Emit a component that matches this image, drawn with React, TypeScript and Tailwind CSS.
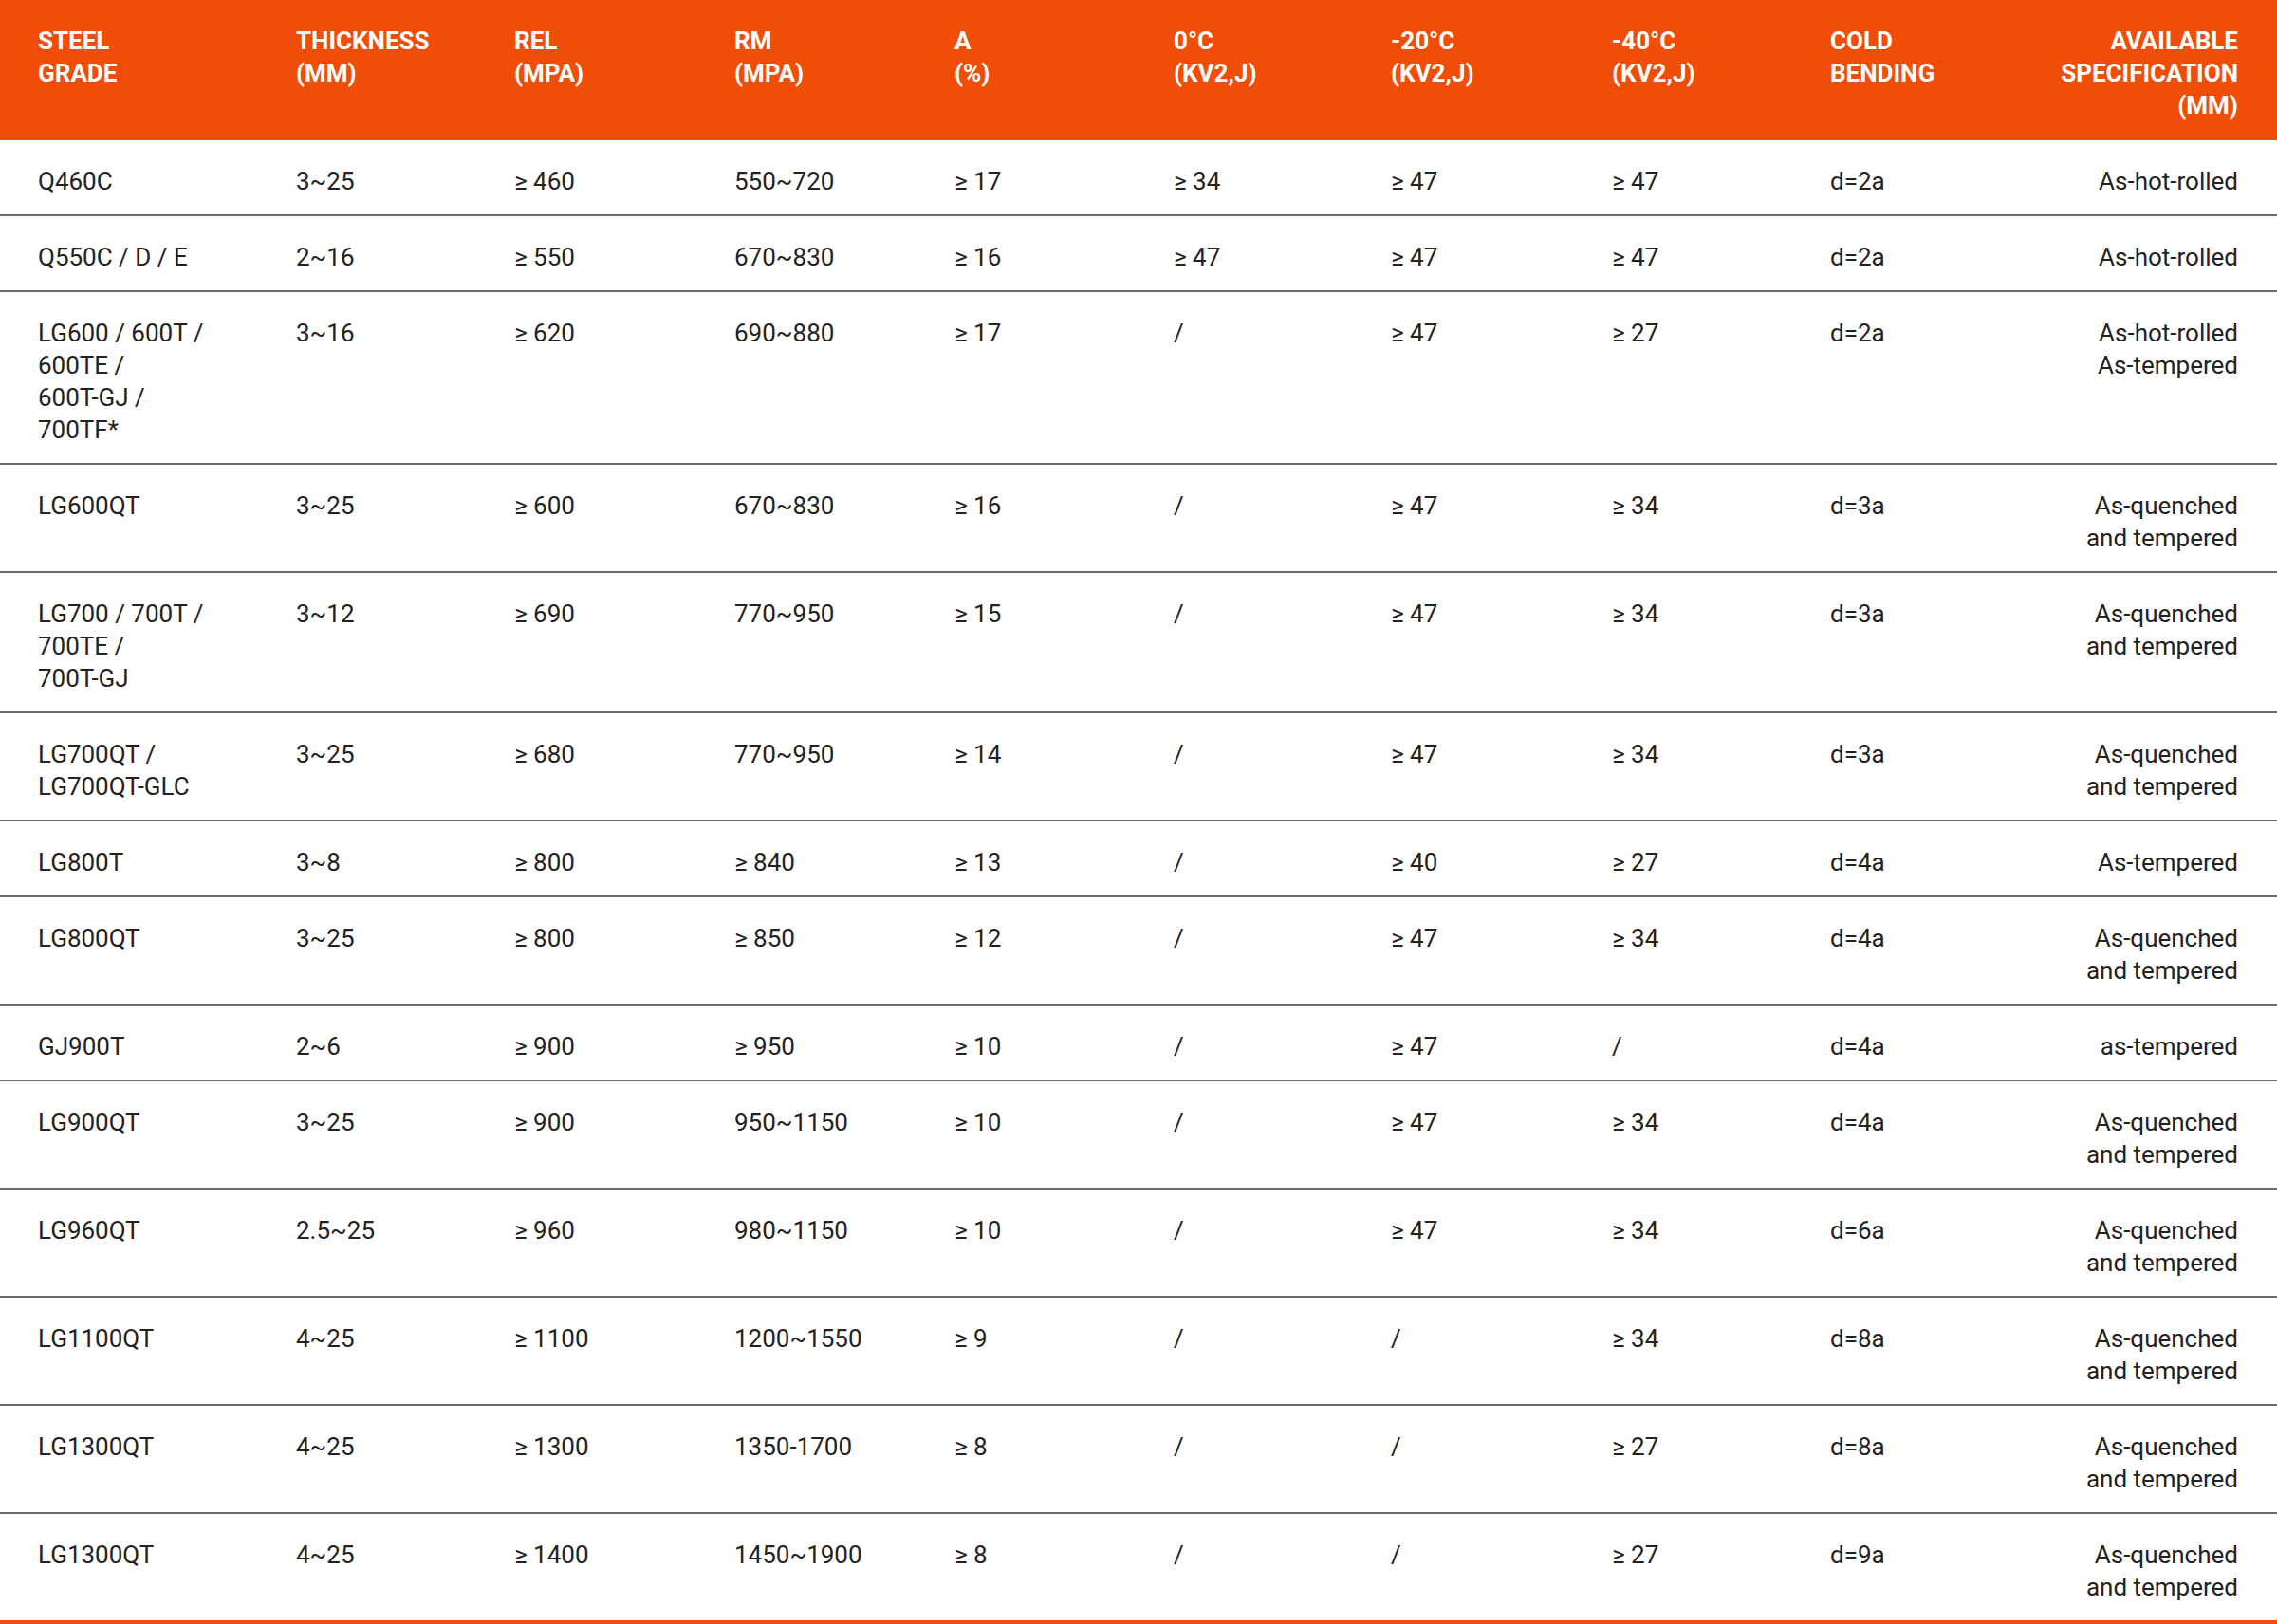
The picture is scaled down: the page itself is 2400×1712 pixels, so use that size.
import React from "react";

type Cell = string | string[];

const headers: string[][] = [
  ["STEEL", "GRADE"],
  ["THICKNESS", "(MM)"],
  ["REL", "(MPA)"],
  ["RM", "(MPA)"],
  ["A", "(%)"],
  ["0°C", "(KV2,J)"],
  ["-20°C", "(KV2,J)"],
  ["-40°C", "(KV2,J)"],
  ["COLD", "BENDING"],
  ["AVAILABLE", "SPECIFICATION", "(MM)"],
];

const QT = ["As-quenched", "and tempered"];

const rows: Cell[][] = [
  ["Q460C", "3~25", "≥ 460", "550~720", "≥ 17", "≥ 34", "≥ 47", "≥ 47", "d=2a", "As-hot-rolled"],
  ["Q550C / D / E", "2~16", "≥ 550", "670~830", "≥ 16", "≥ 47", "≥ 47", "≥ 47", "d=2a", "As-hot-rolled"],
  [
    ["LG600 / 600T /", "600TE /", "600T-GJ /", "700TF*"],
    "3~16", "≥ 620", "690~880", "≥ 17", "/", "≥ 47", "≥ 27", "d=2a",
    ["As-hot-rolled", "As-tempered"],
  ],
  ["LG600QT", "3~25", "≥ 600", "670~830", "≥ 16", "/", "≥ 47", "≥ 34", "d=3a", QT],
  [
    ["LG700 / 700T /", "700TE /", "700T-GJ"],
    "3~12", "≥ 690", "770~950", "≥ 15", "/", "≥ 47", "≥ 34", "d=3a", QT,
  ],
  [["LG700QT /", "LG700QT-GLC"], "3~25", "≥ 680", "770~950", "≥ 14", "/", "≥ 47", "≥ 34", "d=3a", QT],
  ["LG800T", "3~8", "≥ 800", "≥ 840", "≥ 13", "/", "≥ 40", "≥ 27", "d=4a", "As-tempered"],
  ["LG800QT", "3~25", "≥ 800", "≥ 850", "≥ 12", "/", "≥ 47", "≥ 34", "d=4a", QT],
  ["GJ900T", "2~6", "≥ 900", "≥ 950", "≥ 10", "/", "≥ 47", "/", "d=4a", "as-tempered"],
  ["LG900QT", "3~25", "≥ 900", "950~1150", "≥ 10", "/", "≥ 47", "≥ 34", "d=4a", QT],
  ["LG960QT", "2.5~25", "≥ 960", "980~1150", "≥ 10", "/", "≥ 47", "≥ 34", "d=6a", QT],
  ["LG1100QT", "4~25", "≥ 1100", "1200~1550", "≥ 9", "/", "/", "≥ 34", "d=8a", QT],
  ["LG1300QT", "4~25", "≥ 1300", "1350-1700", "≥ 8", "/", "/", "≥ 27", "d=8a", QT],
  ["LG1300QT", "4~25", "≥ 1400", "1450~1900", "≥ 8", "/", "/", "≥ 27", "d=9a", QT],
];

const grid =
  "grid grid-cols-[272px_230px_232px_232px_231px_229px_233px_230px_230px_minmax(0,1fr)] px-[40px] pr-[41px]";

function Lines({ v }: { v: Cell }) {
  const arr = Array.isArray(v) ? v : [v];
  return (
    <>
      {arr.map((l, i) => (
        <div key={i} className="whitespace-nowrap">
          {l}
        </div>
      ))}
    </>
  );
}

export default function App() {
  return (
    <div className="w-[2400px] min-h-[1712px] bg-white font-['Roboto',_'Liberation_Sans',_sans-serif] text-[26px] leading-[34px]">
      <div className={`${grid} bg-[#f04e08] pt-[26px] pb-[20px] font-bold text-white`}>
        {headers.map((h, i) => (
          <div key={i} className={i === headers.length - 1 ? "text-right" : ""}>
            <Lines v={h} />
          </div>
        ))}
      </div>
      {rows.map((r, ri) => (
        <div
          key={ri}
          className={`${grid} pt-[26px] pb-[18px] text-[#222222] ${
            ri === rows.length - 1
              ? "border-b-4 border-[#f04e08]"
              : "border-b-2 border-[#6b6b6b]"
          }`}
        >
          {r.map((c, ci) => (
            <div key={ci} className={ci === r.length - 1 ? "text-right" : ""}>
              <Lines v={c} />
            </div>
          ))}
        </div>
      ))}
    </div>
  );
}
